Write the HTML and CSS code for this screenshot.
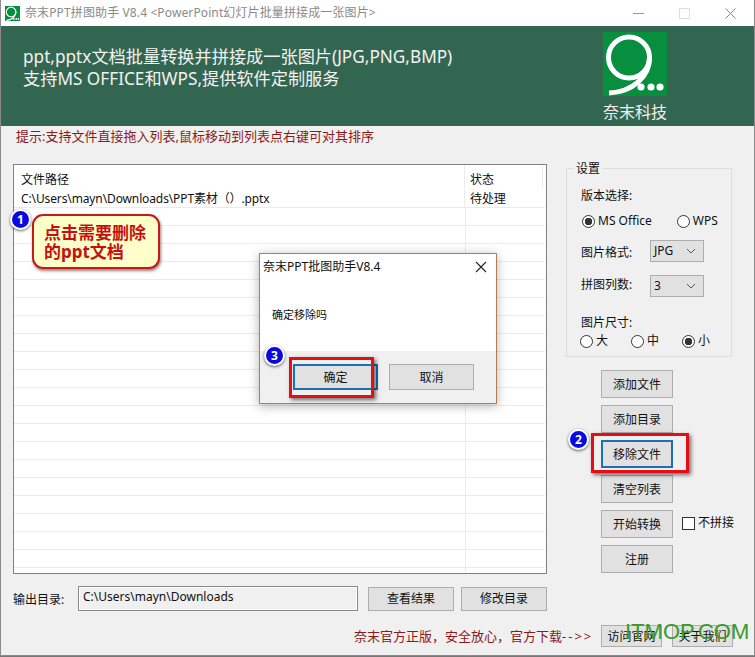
FILE: index.html
```html
<!DOCTYPE html>
<html>
	<head>
		<title>奈末PPT拼图助手</title>
		<meta charset="utf-8">
		<link rel="stylesheet" href="styles.css">
	</head>
	<body>
		<svg class="defs" width="0" height="0">
			<symbol id="logo" viewBox="0 0 64 64">
				<rect width="64" height="64" fill="#078e3f"/>
				<circle cx="26" cy="25.5" r="20.5" fill="none" stroke="#fff" stroke-width="5"/>
				<path d="M46.5 26C46.5 44 30 60 6 61" fill="none" stroke="#fff" stroke-width="5"/>
				<circle cx="38" cy="55" r="3.6" fill="#fff"/>
				<circle cx="48" cy="55" r="3.6" fill="#fff"/>
				<circle cx="57" cy="55" r="3.6" fill="#fff"/>
			</symbol>
			<symbol id="chev" viewBox="0 0 10 6">
				<path d="M1 1L5 5L9 1" fill="none" stroke="#555" stroke-width="1"/>
			</symbol>
		</svg>
		<div id="window">
			<div id="titlebar">
				<svg class="title_icon"><use href="#logo"/></svg>
				<span class="title_text">奈末PPT拼图助手 V8.4 &lt;PowerPoint幻灯片批量拼接成一张图片&gt;</span>
				<div class="controls">
					<svg width="11" height="11"><path d="M0 5.5H11" stroke="#999"/></svg>
					<svg width="11" height="11"><rect x="0.5" y="0.5" width="10" height="10" fill="none" stroke="#ddd"/></svg>
					<svg width="11" height="11"><path d="M0.5 0.5L10.5 10.5M10.5 0.5L0.5 10.5" stroke="#888"/></svg>
				</div>
			</div>

			<div id="banner">
				<div class="banner_text">
					<p>ppt,pptx文档批量转换并拼接成一张图片(JPG,PNG,BMP)</p>
					<p>支持MS OFFICE和WPS,提供软件定制服务</p>
				</div>
				<div class="brand">
					<svg class="brand_logo"><use href="#logo"/></svg>
					<span>奈末科技</span>
				</div>
			</div>

			<div id="hint">提示:支持文件直接拖入列表,鼠标移动到列表点右键可对其排序</div>

			<div id="main">
				<div id="list">
					<div class="list_head"><span class="col_path">文件路径</span><span class="col_state">状态</span></div>
					<div class="list_row"><span class="col_path">C:\Users\mayn\Downloads\PPT素材（）.pptx</span><span class="col_state">待处理</span></div>
					<div class="list_empty"></div>
				</div>

				<div id="side">
					<div class="group">
						<span class="legend">设置</span>
						<div class="lbl first">版本选择:</div>
						<div class="radios version">
							<label class="opt"><i class="radio on"></i>MS Office</label>
							<label class="opt"><i class="radio"></i>WPS</label>
						</div>
						<div class="field">
							<span class="lbl lbl_low">图片格式:</span>
							<div class="select">JPG<svg><use href="#chev"/></svg></div>
						</div>
						<div class="field">
							<span class="lbl lbl_high">拼图列数:</span>
							<div class="select">3<svg><use href="#chev"/></svg></div>
						</div>
						<div class="lbl size_lbl">图片尺寸:</div>
						<div class="radios sizes">
							<label class="opt"><i class="radio"></i>大</label>
							<label class="opt"><i class="radio"></i>中</label>
							<label class="opt"><i class="radio on"></i>小</label>
						</div>
					</div>
					<div class="actions">
						<div class="btn big">添加文件</div>
						<div class="btn big">添加目录</div>
						<div class="btn big focus">移除文件</div>
						<div class="btn big">清空列表</div>
						<div class="action_row">
							<div class="btn big">开始转换</div>
							<label class="check"><i class="box"></i>不拼接</label>
						</div>
						<div class="btn big">注册</div>
					</div>
				</div>
			</div>

			<div id="output">
				<span class="out_lbl">输出目录:</span>
				<div class="out_path">C:\Users\mayn\Downloads</div>
				<div class="btn out_btn">查看结果</div>
				<div class="btn out_btn">修改目录</div>
			</div>

			<div id="footer">
				<span class="promo">奈末官方正版，安全放心，官方下载<span class="arrows">--&gt;&gt;</span></span>
				<div class="btn foot_btn">访问官网</div>
				<div class="btn foot_btn">关于我们</div>
			</div>

			<!-- annotations over the window -->
			<div class="callout">点击需要删除<br>的ppt文档</div>
			<div class="marker marker_rm"></div>
			<div id="dialog">
				<div class="dlg_title">
					<span>奈末PPT批图助手V8.4</span>
					<svg width="12" height="12"><path d="M1 1L11 11M11 1L1 11" stroke="#222" stroke-width="1.1"/></svg>
				</div>
				<div class="dlg_msg">确定移除吗</div>
				<div class="dlg_foot">
					<div class="btn dlg_btn focus">确定</div>
					<div class="btn dlg_btn">取消</div>
				</div>
			</div>
			<div class="marker marker_ok"></div>
			<span class="badge b1">1</span>
			<span class="badge b2">2</span>
			<span class="badge b3">3</span>
			<span class="watermark">ITMOP.COM</span>
		</div>
	</body>
</html>
```

FILE: styles.css
```css
* {
	box-sizing: border-box;
	font-family: "Noto Sans", "Noto Sans CJK SC", sans-serif;
}
html, body {
	margin: 0;
	padding: 0;
	width: 755px;
	height: 657px;
	overflow: hidden;
	background: #777;
}
.defs {
	position: absolute;
}
#window {
	position: relative;
	width: 755px;
	height: 656px;
	background: #f0f0f0;
	border: 1px solid #8c8c8c;
	border-bottom-width: 1px;
	border-top: 0;
	display: flex;
	flex-direction: column;
	font-size: 12px;
	line-height: 16px;
	color: #111;
}

/* title */
#titlebar {
	height: 26px;
	flex: none;
	background: #fff;
	display: flex;
	align-items: center;
	padding-left: 4px;
}
.title_icon {
	width: 15px;
	height: 15px;
	margin-right: 5px;
}
.title_text {
	color: #8a8a8a;
	font-size: 12px;
	letter-spacing: 0.12px;
	white-space: nowrap;
}
.controls {
	margin-left: auto;
	margin-right: 18px;
	display: flex;
	gap: 35px;
}

/* banner */
#banner {
	height: 100px;
	flex: none;
	background: #336650;
	color: #f2f2f2;
	display: flex;
	padding: 20px 0 0 22px;
}
.banner_text {
	width: 580px;
	font-size: 17.2px;
	line-height: 22px;
}
.banner_text p {
	margin: 0;
	white-space: nowrap;
}
.brand {
	margin-top: -14px;
	width: 64px;
	display: flex;
	flex-direction: column;
	font-size: 16px;
	line-height: 22px;
	white-space: nowrap;
}
.brand_logo {
	width: 64px;
	height: 64px;
	margin-bottom: 5px;
}

#hint {
	height: 38px;
	flex: none;
	padding: 2px 0 0 15px;
	font-size: 13px;
	color: #8c1a1a;
	white-space: nowrap;
}

/* file list */
#main {
	display: flex;
	height: 410px;
	flex: none;
	padding-left: 12px;
}
#list {
	width: 534px;
	height: 410px;
	background: #fff;
	border: 1px solid #808080;
	overflow: hidden;
	display: flex;
	flex-direction: column;
}
.list_head, .list_row {
	display: flex;
	flex: none;
	white-space: nowrap;
}
.list_head {
	height: 25px;
	align-items: flex-end;
	padding-bottom: 2px;
}
.list_row {
	height: 18px;
	font-size: 12px;
	line-height: 18px;
	letter-spacing: -0.12px;
	border-bottom: 1px solid #ebebeb;
	margin-right: 1px;
}
.col_path {
	width: 451px;
	padding-left: 7px;
	border-right: 1px solid #ebebeb;
}
.col_state {
	padding-left: 5px;
}
.list_head .col_path, .list_head .col_state {
	height: 23px;
	line-height: 29px;
}
.list_head .col_state {
	width: 78px;
	border-right: 1px solid #ebebeb;
}
.list_empty {
	flex: 1;
	margin-right: 1px;
	background:
		linear-gradient(#ebebeb, #ebebeb) 451px 0 / 1px 100% no-repeat,
		repeating-linear-gradient(#fff 0, #fff 17px, #ebebeb 17px, #ebebeb 18px);
}

/* settings */
#side {
	width: 172px;
	margin-left: 19px;
	display: flex;
	flex-direction: column;
}
.group {
	position: relative;
	width: 166px;
	height: 189px;
	margin-top: 4px;
	border: 1px solid #dcdcdc;
	padding: 0 0 0 14px;
}
.legend {
	position: absolute;
	left: 6px;
	top: -7px;
	background: #f0f0f0;
	padding: 0 3px;
	line-height: 14px;
}
.lbl {
	white-space: nowrap;
}
.lbl.first {
	margin-top: 19px;
}
.lbl_low {
	padding-top: 4px;
}
.lbl_high {
	padding-bottom: 2px;
}
.radios {
	display: flex;
}
.opt {
	display: flex;
	align-items: center;
	white-space: nowrap;
}
.radio {
	width: 13px;
	height: 13px;
	border: 1px solid #333;
	border-radius: 50%;
	background: #fff;
	margin-right: 3px;
	flex: none;
}
.radio.on {
	background: radial-gradient(circle, #333 0, #333 3.5px, #fff 4px);
}
.version {
	margin: 9px 0 0 1px;
	gap: 25px;
}
.field {
	display: flex;
	align-items: center;
	height: 22px;
	margin-top: 13px;
}
.version + .field {
	margin-top: 11px;
}
.field .lbl {
	width: 69px;
}
.select {
	width: 54px;
	height: 22px;
	background: #e1e1e1;
	border: 1px solid #adadad;
	padding: 2px 0 0 3px;
	position: relative;
}
.select svg {
	position: absolute;
	right: 7px;
	top: 7px;
	width: 10px;
	height: 6px;
}
.size_lbl {
	margin-top: 18px;
}
.sizes {
	margin: 2px 0 0 -1px;
	gap: 23px;
}

/* buttons */
.btn {
	background: #e1e1e1;
	border: 1px solid #adadad;
	display: flex;
	align-items: center;
	justify-content: center;
	padding-top: 1px;
	white-space: nowrap;
	color: #111;
}
.btn.focus {
	border: 2px solid #1d6fb0;
}
.big {
	width: 72px;
	height: 28px;
}
.actions {
	margin: 13px 0 0 35px;
	display: flex;
	flex-direction: column;
	gap: 7px;
}
.action_row {
	display: flex;
	align-items: center;
	gap: 9px;
}
.check {
	display: flex;
	align-items: center;
	white-space: nowrap;
	margin-bottom: 2px;
}
.box {
	width: 13px;
	height: 13px;
	background: #fff;
	border: 1px solid #333;
	margin-right: 3px;
}

/* output row */
#output {
	display: flex;
	align-items: center;
	height: 25px;
	flex: none;
	margin-top: 12px;
	padding-left: 12px;
}
.out_lbl {
	width: 65px;
	padding-top: 2px;
	white-space: nowrap;
}
.out_path {
	width: 280px;
	height: 25px;
	background: #f0f0f0;
	border: 1px solid #8a8a8a;
	box-shadow: inset 0 0 0 1px #fff;
	padding: 2px 0 0 4px;
	margin-right: 10px;
}
.out_btn {
	width: 86px;
	height: 24px;
	margin-right: 7px;
}

/* footer */
#footer {
	display: flex;
	align-items: center;
	height: 22px;
	flex: none;
	margin-top: 14px;
	padding-left: 353px;
}
.promo {
	width: 247px;
	font-size: 13px;
	color: #8c1a1a;
	white-space: nowrap;
}
.arrows {
	letter-spacing: 2px;
}
.foot_btn {
	width: 61px;
	height: 22px;
	margin-right: 10px;
}

/* annotations */
.callout {
	position: absolute;
	left: 31px;
	top: 214px;
	width: 128px;
	height: 55px;
	padding: 7px 0 0 10px;
	background: #ffffc9;
	border: 2px solid #c41a1a;
	border-radius: 11px;
	box-shadow: 1px 2px 3px rgba(60, 0, 0, 0.5);
	color: #c80f0f;
	font-size: 17px;
	font-weight: bold;
	line-height: 19px;
	white-space: nowrap;
}
.badge {
	position: absolute;
	width: 21px;
	height: 21px;
	border-radius: 50%;
	background: #0a0ae0;
	border: 2px solid #fff;
	box-shadow: 0 1px 3px rgba(0, 0, 0, 0.6);
	color: #fff;
	font-size: 12px;
	font-weight: bold;
	line-height: 17px;
	text-align: center;
}
.b1 { left: 9px; top: 209px; }
.b2 { left: 567px; top: 429px; }
.b3 { left: 263px; top: 345px; }
.marker {
	position: absolute;
	border: 3px solid #e30f14;
	box-shadow: 2px 2px 4px rgba(0, 0, 0, 0.55);
}
.marker_rm {
	left: 590px;
	top: 433px;
	width: 98px;
	height: 40px;
}
.marker_ok {
	left: 288px;
	top: 357px;
	width: 85px;
	height: 41px;
}
.watermark {
	position: absolute;
	left: 624px;
	top: 620px;
	font-family: "Liberation Sans", sans-serif;
	font-size: 22px;
	line-height: 24px;
	color: #3a9a2a;
	white-space: nowrap;
}

/* dialog */
#dialog {
	position: absolute;
	left: 258px;
	top: 253px;
	width: 238px;
	height: 151px;
	background: #fff;
	border: 1px solid #b47c50;
	box-shadow: 0 2px 10px rgba(0, 0, 0, 0.3);
	display: flex;
	flex-direction: column;
}
.dlg_title {
	display: flex;
	align-items: center;
	justify-content: space-between;
	height: 24px;
	padding: 1px 9px 0 3px;
	white-space: nowrap;
}
.dlg_msg {
	height: 73px;
	padding: 29px 0 0 12px;
	font-size: 11px;
}
.dlg_foot {
	flex: 1;
	background: #f0f0f0;
	display: flex;
	gap: 11px;
	padding: 13px 0 0 33px;
}
.dlg_btn {
	width: 85px;
	height: 26px;
}
```
